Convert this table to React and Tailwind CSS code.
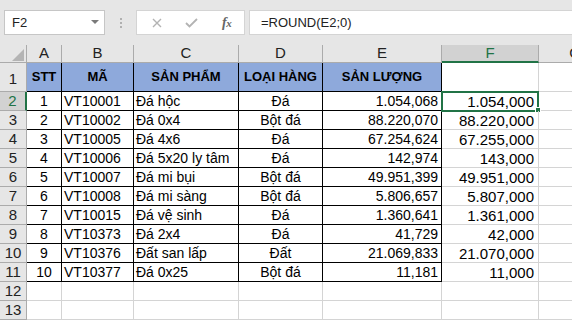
import React from 'react';

const cols = ['A', 'B', 'C', 'D', 'E', 'F', 'G'];

const headers = ['STT', 'MÃ', 'SẢN PHẨM', 'LOẠI HÀNG', 'SẢN LƯỢNG'];

const rows = [
    ['1', 'VT10001', 'Đá hộc', 'Đá', '1.054,068', '1.054,000'],
    ['2', 'VT10002', 'Đá 0x4', 'Bột đá', '88.220,070', '88.220,000'],
    ['3', 'VT10005', 'Đá 4x6', 'Đá', '67.254,624', '67.255,000'],
    ['4', 'VT10006', 'Đá 5x20 ly tâm', 'Đá', '142,974', '143,000'],
    ['5', 'VT10007', 'Đá mi bụi', 'Bột đá', '49.951,399', '49.951,000'],
    ['6', 'VT10008', 'Đá mi sàng', 'Bột đá', '5.806,657', '5.807,000'],
    ['7', 'VT10015', 'Đá vệ sinh', 'Đá', '1.360,641', '1.361,000'],
    ['8', 'VT10373', 'Đá 2x4', 'Đá', '41,729', '42,000'],
    ['9', 'VT10376', 'Đất san lấp', 'Đất', '21.069,833', '21.070,000'],
    ['10', 'VT10377', 'Đá 0x25', 'Bột đá', '11,181', '11,000'],
];

const align = ['justify-center', 'justify-start pl-[2px]', 'justify-start pl-[2px]', 'justify-center', 'justify-end pr-[3px]'];

function TopBar() {
    return (
        <div className="h-[45px] bg-[#e6e6e6] flex items-start pt-[10px] pl-[4px]">
            {/* Name box */}
            <div className="w-[101px] h-[25px] bg-white border border-[#c6c6c6] flex items-center justify-between pl-[7px] pr-[5px]">
                <span className="text-[13px] text-[#222]">F2</span>
                <svg width="8" height="5" viewBox="0 0 8 5">
                    <polygon points="0,0 8,0 4,4" fill="#7a7a7a" />
                </svg>
            </div>
            {/* Dots */}
            <div className="w-[31px] h-[25px] flex flex-col items-center justify-center gap-[2px]">
                <div className="w-[2px] h-[2px] bg-[#b0b0b0]" />
                <div className="w-[2px] h-[2px] bg-[#b0b0b0]" />
                <div className="w-[2px] h-[2px] bg-[#b0b0b0]" />
            </div>
            {/* Cancel / Enter / fx */}
            <div className="w-[109px] h-[25px] bg-white border border-[#d4d4d4] flex items-center">
                <svg className="ml-[15px]" width="10" height="10" viewBox="0 0 10 10">
                    <path d="M1 1 L9 9 M9 1 L1 9" stroke="#b3b3b3" strokeWidth="1.4" />
                </svg>
                <svg className="ml-[23px]" width="13" height="10" viewBox="0 0 13 10">
                    <path d="M1 5 L4.5 8.5 L12 1" stroke="#b3b3b3" strokeWidth="1.8" fill="none" />
                </svg>
                <span className="ml-[24px] text-[14px] italic text-[#666] font-['Liberation_Serif',serif] font-bold tracking-[-0.5px]">
                    f<span className="text-[11px]">x</span>
                </span>
            </div>
            {/* Formula */}
            <div className="ml-[4px] flex-1 h-[25px] bg-white border border-[#d4d4d4] border-r-0 flex items-center pl-[11px]">
                <span className="text-[13px] text-[#222]">=ROUND(E2;0)</span>
            </div>
        </div>
    );
}

function ColHeader({ label, selected, last }) {
    return (
        <div
            className={
                'flex items-center justify-center text-[15px] ' +
                (selected
                    ? 'bg-[#d2d2d2] text-[#217346] border-r border-r-[#ababab] border-b-2 border-b-[#217346]'
                    : 'bg-[#e6e6e6] text-[#222] border-b border-b-[#ababab] ' + (last ? '' : 'border-r border-r-[#ababab]'))
            }
        >
            {label}
        </div>
    );
}

function RowHeader({ n, selected, tall }) {
    return (
        <div
            className={
                'flex justify-center text-[15px] border-b ' +
                (tall ? 'items-end pb-[1px] ' : 'items-center ') +
                (selected
                    ? 'bg-[#d2d2d2] text-[#217346] border-b-[#ababab] border-r-2 border-r-[#217346]'
                    : 'bg-[#e6e6e6] text-[#222] border-b-[#ababab] border-r border-r-[#ababab]')
            }
        >
            {n}
        </div>
    );
}

export default function App() {
    return (
        <div className="w-[572px] h-[321px] overflow-hidden bg-white font-['Liberation_Sans',Arial,sans-serif]">
            <TopBar />
            <div className="grid grid-cols-[27px_35px_72px_105px_84px_119px_97px_72px] grid-rows-[18px_29px_repeat(12,19px)]">
                {/* corner */}
                <div className="bg-[#e6e6e6] border-r border-b border-[#ababab] flex items-end justify-end pr-[2px] pb-[1px]">
                    <svg width="12" height="12" viewBox="0 0 12 12">
                        <polygon points="12,0 12,12 0,12" fill="#b4b4b4" />
                    </svg>
                </div>
                {cols.map((c, i) => (
                    <ColHeader key={c} label={c} selected={c === 'F'} last={i === cols.length - 1} />
                ))}

                {/* Row 1 */}
                <RowHeader n="1" tall />
                {headers.map((h) => (
                    <div
                        key={h}
                        className="bg-[#8ea9db] border-r border-b border-black flex items-center justify-center text-[13px] font-bold text-black"
                    >
                        {h}
                    </div>
                ))}
                <div className="border-r border-b border-[#d4d4d4]" />
                <div className="border-b border-[#d4d4d4]" />

                {/* Data rows */}
                {rows.map((r, ri) => (
                    <React.Fragment key={ri}>
                        <RowHeader n={String(ri + 2)} selected={ri === 0} />
                        {r.slice(0, 5).map((v, ci) => (
                            <div
                                key={ci}
                                className={'border-r border-b border-black flex items-end pb-[1px] text-[14px] text-black leading-[16px] whitespace-nowrap ' + align[ci]}
                            >
                                {v}
                            </div>
                        ))}
                        <div className="relative border-r border-b border-[#d4d4d4] flex items-end justify-end pr-[4px] text-[15px] text-black leading-[17px]">
                            {r[5]}
                            {ri === 0 && (
                                <>
                                    <div className="absolute -left-[1px] -top-[1px] w-[98px] h-[21px] border-2 border-[#217346]" />
                                    <div className="absolute -right-[3px] -bottom-[3px] w-[6px] h-[6px] bg-[#217346] border border-white" />
                                </>
                            )}
                        </div>
                        <div className="border-b border-[#d4d4d4]" />
                    </React.Fragment>
                ))}

                {/* Empty rows */}
                {[12, 13].map((n) => (
                    <React.Fragment key={n}>
                        <RowHeader n={String(n)} />
                        {[0, 1, 2, 3, 4, 5].map((i) => (
                            <div key={i} className="border-r border-b border-[#d4d4d4]" />
                        ))}
                        <div className="border-b border-[#d4d4d4]" />
                    </React.Fragment>
                ))}
            </div>
        </div>
    );
}
